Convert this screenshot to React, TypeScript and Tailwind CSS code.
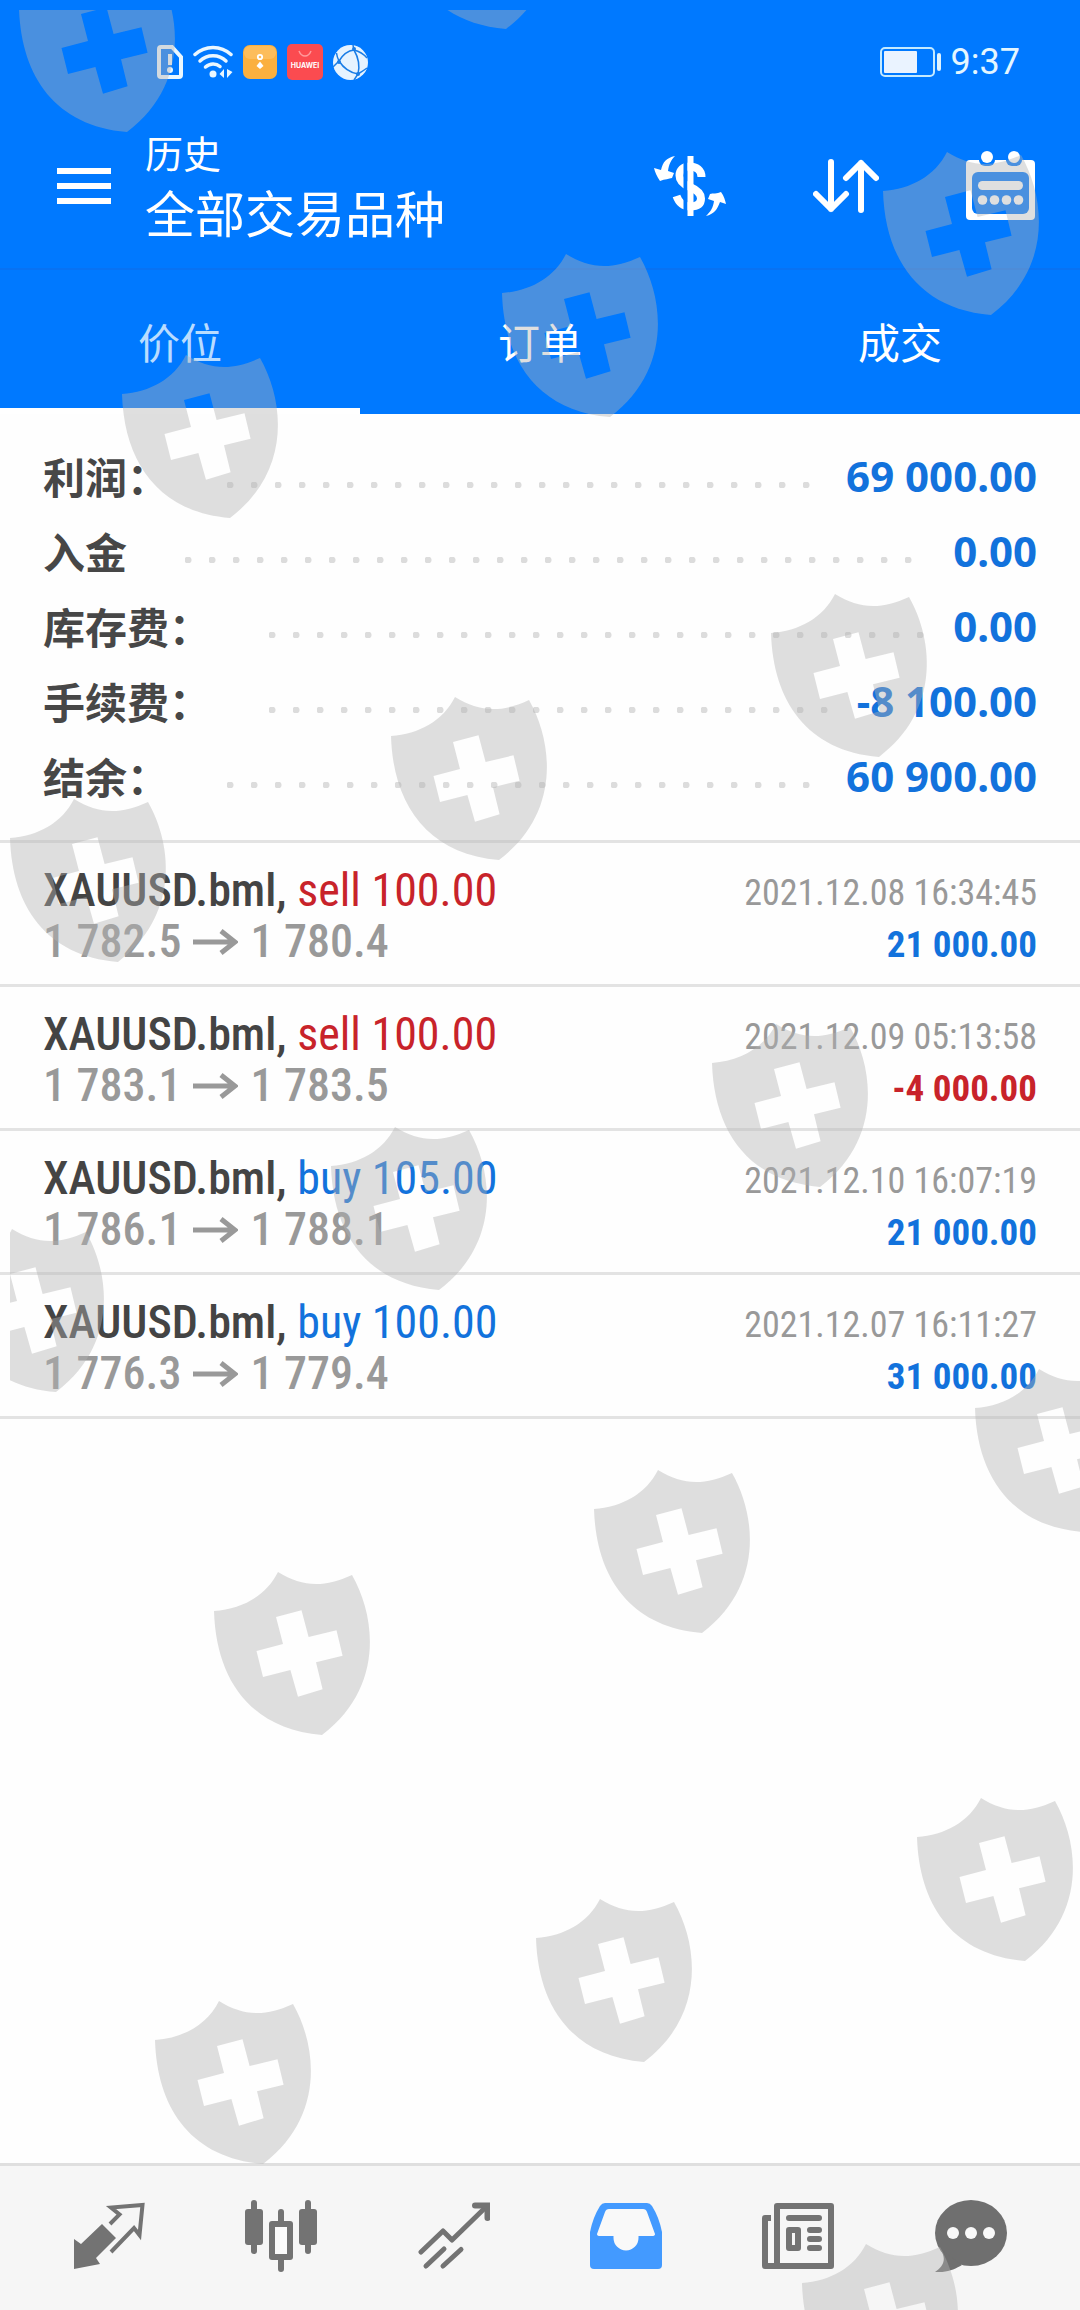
import React from "react";

const SHIELDS: [number, number][] = [
  [19, -31], [398, -134], [883, 152], [502, 254], [122, 355], [771, 594],
  [391, 697], [10, 799], [712, 1024], [331, 1127], [-52, 1229], [975, 1369],
  [594, 1470], [214, 1572], [917, 1798], [536, 1899], [155, 2001], [802, 2244],
];

const SUMMARY = [
  { label: "利润：", value: "69 000.00" },
  { label: "入金", value: "0.00" },
  { label: "库存费：", value: "0.00" },
  { label: "手续费：", value: "-8 100.00" },
  { label: "结余：", value: "60 900.00" },
];

const DEALS = [
  { symbol: "XAUUSD.bml,", side: "sell", volume: "100.00", from: "1 782.5", to: "1 780.4", time: "2021.12.08 16:34:45", profit: "21 000.00" },
  { symbol: "XAUUSD.bml,", side: "sell", volume: "100.00", from: "1 783.1", to: "1 783.5", time: "2021.12.09 05:13:58", profit: "-4 000.00" },
  { symbol: "XAUUSD.bml,", side: "buy", volume: "105.00", from: "1 786.1", to: "1 788.1", time: "2021.12.10 16:07:19", profit: "21 000.00" },
  { symbol: "XAUUSD.bml,", side: "buy", volume: "100.00", from: "1 776.3", to: "1 779.4", time: "2021.12.07 16:11:27", profit: "31 000.00" },
];

function Watermark() {
  return (
    <div className="pointer-events-none absolute top-[10px] right-0 bottom-0 left-[10px] overflow-hidden" aria-hidden="true">
      <svg className="h-full w-full" fill="#b2b2b2" fillOpacity="0.416" fillRule="evenodd">
        {SHIELDS.map(([x, y]) => (
          <path
            key={`${x}-${y}`}
            transform={`translate(${x - 10} ${y - 10})`}
            d="M0 39C28 37 52 24 64 0C88 15 110 16 138 3C163 47 169 117 108 163C36 157 2 107 0 39ZM62 45L87.500 38.300L94.600 65L122.500 58.300L128.600 83.700L102 90.300L108.600 117.300L84 124.700L76.400 98L49 105L42.500 79L69 72Z"
          />
        ))}
      </svg>
    </div>
  );
}

function SimIcon() {
  return (
    <svg width="26" height="34" viewBox="0 0 26 34" fill="none">
      <path d="M4 2H15L24 12V30Q24 32 22 32H4Q2 32 2 30V4Q2 2 4 2Z" stroke="#eaf7ff" strokeWidth="4" />
      <path d="M13 9V20" stroke="#eaf7ff" strokeWidth="4" />
      <circle cx="13" cy="25" r="3" fill="#eaf7ff" />
    </svg>
  );
}

function WifiIcon() {
  return (
    <svg width="40" height="34" viewBox="0 0 40 34" fill="none" stroke="#eaf7ff" strokeWidth="3.500" strokeLinecap="round">
      <path d="M2 9.500C12 0 28 0 38 9.500" />
      <path d="M7 16C14 9 26 9 33 16" />
      <path d="M12.500 22C17 18 23 18 27 21.500" />
      <circle cx="20" cy="29" r="3.500" fill="#eaf7ff" stroke="none" />
      <path d="M31 24V33L26.500 29ZM34 24V33L39.500 27Z" fill="#eaf7ff" stroke="none" />
    </svg>
  );
}

function OrangeAppIcon() {
  return (
    <svg width="34" height="34" viewBox="0 0 34 34">
      <rect width="34" height="34" rx="7" fill="#fbb03f" />
      <rect x="1" y="1" width="32" height="13" rx="6" fill="#fdbd5b" />
      <circle cx="17" cy="12" r="2.200" fill="none" stroke="#fff" strokeWidth="1.800" />
      <path d="M13.500 21L17 16.500L20.500 21L17 24Z" fill="#fff" />
    </svg>
  );
}

function HuaweiAppIcon() {
  return (
    <svg width="36" height="36" viewBox="0 0 36 36">
      <rect width="36" height="36" rx="5" fill="#fb4b50" />
      <path d="M12 7Q14 12 18 12Q22 12 24 7" fill="none" stroke="#ff9a9c" strokeWidth="1.500" />
      <text x="18" y="24" textAnchor="middle" fontFamily="Inter, sans-serif" fontSize="7" fontWeight="700" fill="#fff">HUAWEI</text>
    </svg>
  );
}

function GlobeIcon() {
  return (
    <svg width="35" height="35" viewBox="0 0 35 35" fill="none">
      <circle cx="17.500" cy="17.500" r="17.500" fill="#e6f3ff" />
      <g stroke="#1a7de6" strokeWidth="1.500">
        <path d="M21 5Q12 6 6 16Q4 12 3.500 8" />
        <path d="M21 5Q29 7 34 13M21 5L20 0" />
        <path d="M21 5Q28 17 25 29Q30 26 34 23" />
        <path d="M6 16Q13 27 25 29L21 35M6 16L0 22" />
      </g>
      <circle cx="21" cy="4" r="2" fill="#1a7de6" />
      <circle cx="6" cy="17" r="2" fill="#1a7de6" />
      <circle cx="25" cy="29" r="2" fill="#1a7de6" />
    </svg>
  );
}

function BatteryIcon() {
  return (
    <svg width="61" height="30" viewBox="0 0 61 30" fill="none">
      <rect x="1" y="1" width="53" height="28" rx="4" stroke="#c4eaff" strokeWidth="2" />
      <rect x="4" y="4" width="33" height="22" rx="1" fill="#eaf3ff" />
      <rect x="57" y="6" width="4" height="18" rx="2" fill="#dff3ff" />
    </svg>
  );
}

function CurrencyIcon() {
  return (
    <svg width="72" height="60" viewBox="0 0 72 60" fill="none">
      <path d="M47.500 21C47.500 14 42 10.500 36 10.500C29 10.500 25.500 14 25.500 19.500C25.500 26 31 29 36 31C43 34 47 37 47 42.500C47 48 43 50.500 36 50.500C29 50.500 25 47 22.500 40" stroke="#fff" strokeWidth="8" />
      <path d="M31.500 0V60" stroke="#0079ff" strokeWidth="4" />
      <path d="M36.500 0V60" stroke="#fff" strokeWidth="6" />
      <path fill="#fff" d="M21 0C12 2 9 6 7 14L0 12C1 16 3 21 6 25C11 23 15 23 18 22L20 17L14 15C15 8 17 4 21 0Z" />
      <path fill="#fff" d="M52 60C60 58 63 54 66 46L72 48C71 44 70 40 67 36C63 38 59 37 56 38L54 43L60 45C59 52 57 55 52 60Z" />
    </svg>
  );
}

function SortIcon() {
  return (
    <svg width="66" height="54" viewBox="0 0 66 54" fill="none" stroke="#fff" strokeWidth="6" strokeLinecap="round" strokeLinejoin="round">
      <path d="M18 3V50M3 35L18 50L33 35" />
      <path d="M48 51V4M33 19L48 4L63 19" />
    </svg>
  );
}

function CalendarIcon() {
  return (
    <svg width="70" height="70" viewBox="0 0 70 70">
      <rect x="0" y="9" width="69" height="60" rx="4" fill="#fff" />
      <g fill="#0079ff">
        <rect x="13" y="0" width="16" height="15" rx="6" />
        <rect x="40" y="0" width="16" height="15" rx="6" />
        <rect x="6" y="21" width="57" height="42" rx="6" />
      </g>
      <g fill="#fff">
        <circle cx="21" cy="6" r="6" />
        <circle cx="48" cy="6" r="6" />
        <rect x="12" y="30" width="45" height="9" rx="4.500" />
        <circle cx="16.500" cy="49" r="4.800" />
        <circle cx="28.500" cy="49" r="4.800" />
        <circle cx="40.500" cy="49" r="4.800" />
        <circle cx="52.500" cy="49" r="4.800" />
      </g>
    </svg>
  );
}

function QuotesIcon() {
  return (
    <svg width="72" height="72" viewBox="0 0 72 72" fill="none">
      <path d="M29 24L43 38L23 58L27 64L1 69V39L8 44Z" fill="#737373" />
      <path d="M37 24L46.500 14.500L38 7.500L69.500 5L66.500 35L61 28L38 52" stroke="#737373" strokeWidth="4" />
    </svg>
  );
}

function ChartIcon() {
  return (
    <svg width="72" height="72" viewBox="0 0 72 72" fill="#737373">
      <rect x="6" y="0" width="6" height="54" rx="3" />
      <rect x="0" y="9" width="18" height="36" rx="3" />
      <rect x="60" y="0" width="6" height="54" rx="3" />
      <rect x="54" y="9" width="18" height="36" rx="3" />
      <rect x="33" y="9" width="6" height="63" rx="3" />
      <rect x="24" y="21" width="24" height="39" rx="3" />
      <rect x="30" y="27" width="12" height="27" fill="#fbfbfb" />
    </svg>
  );
}

function TradeIcon() {
  return (
    <svg width="72" height="72" viewBox="0 0 72 72" fill="none" stroke="#737373" strokeWidth="5" strokeLinecap="round">
      <path d="M3 52L25 31L34 40L69 6" strokeLinejoin="round" />
      <path d="M57 5.500H69.500V18" strokeWidth="6" />
      <path d="M8 66L26 49M25 66L43 49.500" />
    </svg>
  );
}

function HistoryIcon() {
  return (
    <svg width="72" height="72" viewBox="0 0 72 72">
      <path d="M15 3H57Q60 3 62 6Q69 17 72 32V65Q72 69 68 69H4Q0 69 0 65V32Q3 17 10 6Q12 3 15 3Z" fill="#439aff" />
      <path d="M19 9H53Q56 9 57 12L65 34Q65 36 62 36H48.500V38A12.500 12.500 0 0 1 23.500 38V36H10Q7 36 7 34L15 12Q16 9 19 9Z" fill="#f9f9f9" />
    </svg>
  );
}

function NewsIcon() {
  return (
    <svg width="72" height="72" viewBox="0 0 72 72" fill="none" stroke="#737373" strokeWidth="6" strokeLinejoin="round">
      <rect x="15" y="6" width="54" height="60" />
      <path d="M9 18H3V66H15" />
      <path d="M27 18H57M48 30H57M48 39H57M48 48H57" strokeLinecap="round" />
      <rect x="27" y="30" width="9" height="18" />
    </svg>
  );
}

function ChatIcon() {
  return (
    <svg width="72" height="72" viewBox="0 0 72 72" fill="#6f6f6f">
      <ellipse cx="36" cy="33" rx="36" ry="33" />
      <path d="M5 49C13 60 7 67 0 72C12 73 20 69 27 65Z" />
      <g fill="#f9f9f9">
        <circle cx="18" cy="33" r="6" />
        <circle cx="36" cy="33" r="6" />
        <circle cx="54" cy="33" r="6" />
      </g>
    </svg>
  );
}

function ArrowGlyph() {
  return (
    <svg width="45" height="26" viewBox="0 0 45 26" fill="none" stroke="#999999" strokeWidth="5">
      <path d="M0 13H42M28 2L42 13L28 24" />
    </svg>
  );
}

const NAV = [
  { name: "行情", icon: <QuotesIcon /> },
  { name: "图表", icon: <ChartIcon /> },
  { name: "交易", icon: <TradeIcon /> },
  { name: "历史", icon: <HistoryIcon /> },
  { name: "新闻", icon: <NewsIcon /> },
  { name: "消息", icon: <ChatIcon /> },
];

export default function App() {
  return (
    <div className="relative flex min-h-screen flex-col bg-[#fefefe] font-['Roboto','Noto_Sans_CJK_SC',sans-serif]">
      <header className="bg-[#0079ff] text-white">
        <div className="flex h-[104px] items-center justify-between pt-5 pr-[60px] pl-[157px]">
          <div className="flex items-center gap-[10px]">
            <SimIcon />
            <WifiIcon />
            <OrangeAppIcon />
            <HuaweiAppIcon />
            <GlobeIcon />
          </div>
          <div className="flex items-center gap-[10px] text-4xl text-[#e4f6ff]">
            <BatteryIcon />
            <span>9:37</span>
          </div>
        </div>
        <div className="flex h-[164px] items-center pr-[44px] pl-[57px]">
          <button type="button" aria-label="菜单" className="flex w-[54px] flex-col gap-[9px]">
            <span className="h-[6px] bg-white" />
            <span className="h-[6px] bg-white" />
            <span className="h-[6px] bg-white" />
          </button>
          <div className="ml-[34px] flex-1 pt-[3px]">
            <p className="text-[38px] leading-[56px]">历史</p>
            <h1 className="text-[50px] leading-[66px]">全部交易品种</h1>
          </div>
          <div className="flex items-center gap-[87px]">
            <button type="button" aria-label="货币"><CurrencyIcon /></button>
            <button type="button" aria-label="排序"><SortIcon /></button>
            <button type="button" aria-label="日历"><CalendarIcon /></button>
          </div>
        </div>
        <div role="tablist" className="grid grid-cols-3 border-t-2 border-[#0872f3] text-[42px]">
          <button type="button" role="tab" aria-selected="true" className="h-36 border-y-[6px] border-t-transparent border-b-white pt-1 text-[#b9dcff]">价位</button>
          <button type="button" role="tab" aria-selected="false" className="h-36 border-y-[6px] border-transparent pt-1">订单</button>
          <button type="button" role="tab" aria-selected="false" className="h-36 border-y-[6px] border-transparent pt-1">成交</button>
        </div>
      </header>

      <main className="flex-1">
        <dl className="border-b-[3px] border-[#e3e3e3] px-[43px] pt-6 pb-[27px] text-[42px] font-bold">
          {SUMMARY.map((row) => (
            <div key={row.label} className="flex h-[75px] items-center">
              <dt className="font-['Noto_Sans_CJK_SC',sans-serif] text-[#474747]">{row.label}</dt>
              <span className="mt-[18px] mr-[26px] ml-[58px] h-[6px] flex-1 bg-[radial-gradient(circle_at_3px_3px,#dcdcdc_3px,transparent_4px)] bg-[length:24px_6px] bg-repeat-x" />
              <dd className="font-['Noto_Sans',sans-serif] text-[#1272dc]">{row.value}</dd>
            </div>
          ))}
        </dl>
        <ul className="font-['Roboto_Condensed','Roboto',sans-serif]">
          {DEALS.map((deal) => (
            <li key={deal.time} className="flex h-36 justify-between border-b-[3px] border-[#e3e3e3] px-[43px] pt-[22px]">
              <div className="text-[46px] leading-[51px] font-medium">
                <p className="text-[#444444]">
                  {deal.symbol}{" "}
                  <span className={deal.side === "sell" ? "font-normal text-[#c8232a]" : "font-normal text-[#1272dc]"}>
                    {deal.side} {deal.volume}
                  </span>
                </p>
                <p className="flex items-center gap-3 text-[#999999]">
                  {deal.from}
                  <ArrowGlyph />
                  {deal.to}
                </p>
              </div>
              <div className="pt-[3px] text-right text-[37px] leading-[51px]">
                <p className="text-[36px] text-[#999999]">{deal.time}</p>
                <p className={deal.profit.startsWith("-") ? "font-bold text-[#c8232a]" : "font-bold text-[#1272dc]"}>{deal.profit}</p>
              </div>
            </li>
          ))}
        </ul>
      </main>

      <nav className="flex h-[147px] border-t-[3px] border-[#dfdfdf] bg-[#f6f6f6] px-[23px] pb-1">
        {NAV.map((item) => (
          <button key={item.name} type="button" aria-label={item.name} className="flex flex-1 items-center justify-center">
            {item.icon}
          </button>
        ))}
      </nav>

      <Watermark />
    </div>
  );
}
